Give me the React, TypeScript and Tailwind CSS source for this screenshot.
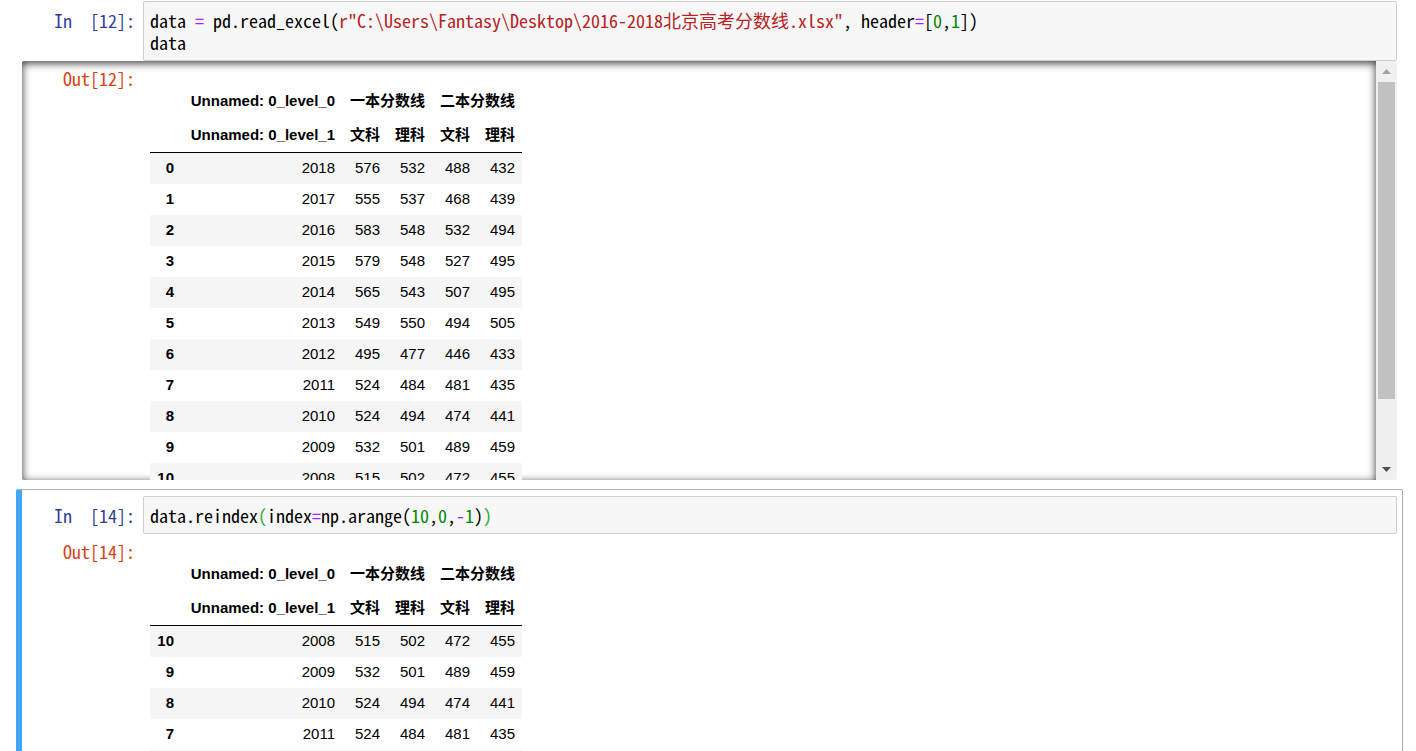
import React from "react";

const mono = "font-['Noto_Sans_Mono_CJK_SC','Liberation_Mono',monospace]";

const table1 = [
  [0, 2018, 576, 532, 488, 432],
  [1, 2017, 555, 537, 468, 439],
  [2, 2016, 583, 548, 532, 494],
  [3, 2015, 579, 548, 527, 495],
  [4, 2014, 565, 543, 507, 495],
  [5, 2013, 549, 550, 494, 505],
  [6, 2012, 495, 477, 446, 433],
  [7, 2011, 524, 484, 481, 435],
  [8, 2010, 524, 494, 474, 441],
  [9, 2009, 532, 501, 489, 459],
  [10, 2008, 515, 502, 472, 455],
];

const table2 = [...table1].reverse().slice(0, 10);

function InPrompt({ n }: { n: number }) {
  return (
    <div className={`w-[121px] shrink-0 pt-[8px] pr-[8px] text-right text-[18px] leading-[22px] text-[#303F9F] ${mono}`}>
      In<span className="inline-block w-[18px]">{"\u00a0"}</span>[{n}]:
    </div>
  );
}

function OutPrompt({ n }: { n: number }) {
  return (
    <div className={`w-[121px] shrink-0 pt-[6px] pr-[8px] text-right text-[18px] leading-[22px] text-[#D84315] ${mono}`}>
      Out[{n}]:
    </div>
  );
}

function DataFrame({ rows }: { rows: number[][] }) {
  const cols = "grid grid-cols-[31px_161px_45px_45px_45px_45px] items-center";
  return (
    <div className="ml-[7px] mt-[16px] w-[372px] font-['Liberation_Sans','Noto_Sans_CJK_SC',sans-serif] text-[15px] text-black">
      <div className="grid h-[34px] grid-cols-[31px_161px_90px_90px] items-center font-bold">
        <div />
        <div className="pr-[7px] text-right">Unnamed: 0_level_0</div>
        <div className="pl-[8px]">一本分数线</div>
        <div className="pl-[8px]">二本分数线</div>
      </div>
      <div className={`${cols} h-[35px] border-b border-black font-bold`}>
        <div />
        <div className="pr-[7px] text-right">Unnamed: 0_level_1</div>
        <div className="pl-[8px]">文科</div>
        <div className="pl-[8px]">理科</div>
        <div className="pl-[8px]">文科</div>
        <div className="pl-[8px]">理科</div>
      </div>
      {rows.map((r, i) => (
        <div key={i} className={`${cols} h-[31px] ${i % 2 === 0 ? "bg-[#f5f5f5]" : "bg-white"}`}>
          <div className="pr-[7px] text-right font-bold">{r[0]}</div>
          {r.slice(1).map((v, j) => (
            <div key={j} className="pr-[7px] text-right">
              {v}
            </div>
          ))}
        </div>
      ))}
    </div>
  );
}

function CodeBox({ children }: { children: React.ReactNode }) {
  return (
    <div
      className={`flex-1 rounded-[2px] border border-[#cfcfcf] bg-[#f7f7f7] px-[6px] py-[7px] text-[18px] leading-[22px] text-black whitespace-pre ${mono}`}
    >
      {children}
    </div>
  );
}

const Op = ({ c }: { c: string }) => <span className="text-[#AA22FF]">{c}</span>;
const Num = ({ c }: { c: string }) => <span className="text-[#008800]">{c}</span>;

export default function App() {
  return (
    <div className="h-[751px] w-[1416px] overflow-hidden bg-white pt-[1px]">
      {/* cell 12 */}
      <div className="ml-[16px] w-[1387px] px-[6px]">
        <div className="flex">
          <InPrompt n={12} />
          <CodeBox>
            <div>
              data <Op c="=" /> pd.read_excel(
              <span className="text-[#BA2121]">r"C:\Users\Fantasy\Desktop\2016-2018北京高考分数线.xlsx"</span>, header
              <Op c="=" />[<Num c="0" />,<Num c="1" />])
            </div>
            <div>data</div>
          </CodeBox>
        </div>
        {/* scrolled output */}
        <div className="flex h-[419px] overflow-hidden rounded-[2px]">
          <div className="flex flex-1 overflow-hidden shadow-[inset_0_2px_8px_rgba(0,0,0,0.8)]">
            <OutPrompt n={12} />
            <div className="pt-[7px]">
              <DataFrame rows={table1} />
            </div>
          </div>
          <div className="flex w-[21px] flex-col bg-[#f0f0f0]">
            <div className="flex h-[21px] items-center justify-center">
              <svg width="9" height="5" viewBox="0 0 9 5">
                <polygon points="4.5,0 9,5 0,5" fill="#a3a3a3" />
              </svg>
            </div>
            <div className="mx-[2px] h-[317px] bg-[#c1c1c1]" />
            <div className="flex-1" />
            <div className="flex h-[21px] items-center justify-center">
              <svg width="9" height="5" viewBox="0 0 9 5">
                <polygon points="0,0 9,0 4.5,5" fill="#505050" />
              </svg>
            </div>
          </div>
        </div>
      </div>

      {/* cell 14, selected */}
      <div className="ml-[16px] mt-[9px] w-[1387px] rounded-[2px] border border-l-[6px] border-[#ababab] border-l-[#42A5F5] pr-[5px] pt-[6px]">
        <div className="flex">
          <InPrompt n={14} />
          <CodeBox>
            data.reindex<span className="text-[#33aa33]">(</span>index<Op c="=" />np.arange(<Num c="10" />,<Num c="0" />,
            <Op c="-" />
            <Num c="1" />)<span className="text-[#33aa33]">)</span>
          </CodeBox>
        </div>
        <div className="flex">
          <OutPrompt n={14} />
          <div className="pt-[7px]">
            <DataFrame rows={table2} />
          </div>
        </div>
      </div>
    </div>
  );
}
